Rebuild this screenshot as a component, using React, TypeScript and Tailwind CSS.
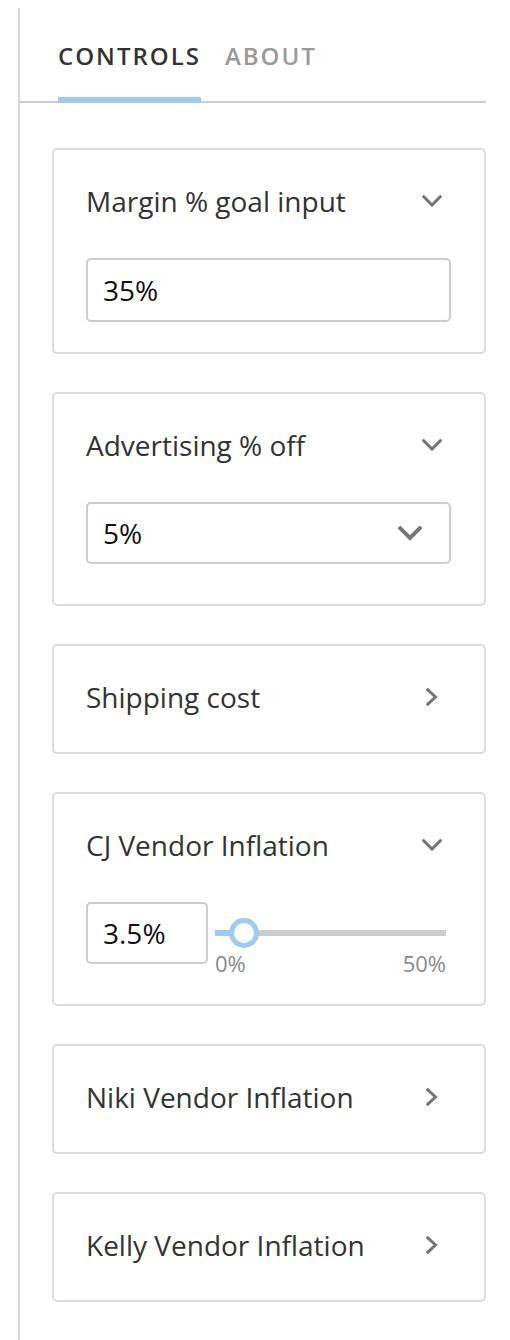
import React from "react";

const font = { fontFamily: '"Open Sans", "Liberation Sans", sans-serif' };

function ChevronDown() {
  return (
    <svg width="20" height="12" viewBox="0 0 20 12" fill="none">
      <path d="M1.8 1.8 L10 10 L18.2 1.8" stroke="#757575" strokeWidth="3" strokeLinecap="square" />
    </svg>
  );
}

function ChevronRight() {
  return (
    <svg width="13" height="18" viewBox="0 0 13 18" fill="none">
      <path d="M1.8 1.8 L9.5 9 L1.8 16.2" stroke="#757575" strokeWidth="3" strokeLinecap="square" />
    </svg>
  );
}

function SelectChevron() {
  return (
    <svg width="24" height="15" viewBox="0 0 24 15" fill="none">
      <path d="M2.3 2.3 L12 12 L21.7 2.3" stroke="#777777" strokeWidth="4" strokeLinecap="square" />
    </svg>
  );
}

function Card({
  title,
  open,
  children,
  pb,
}: {
  title: string;
  open: boolean;
  children?: React.ReactNode;
  pb?: string;
}) {
  return (
    <div className="border-2 border-[#dcdcdc] rounded-[5px] bg-white">
      <div className="flex items-start justify-between pl-[32px] pr-[40px] pt-[32px] pb-[36px]">
        <span className="text-[28px] leading-[38px] text-[#333333]">{title}</span>
        <span className="w-[24px] h-[38px] flex items-center justify-center">
          {open ? <ChevronDown /> : <ChevronRight />}
        </span>
      </div>
      {open && <div className={`pl-[32px] pr-[33px] pt-[2px] ${pb ?? ""}`}>{children}</div>}
    </div>
  );
}

export default function App() {
  const pct = 3.5 / 50;
  const trackW = 231;
  const thumb = 30;
  const left = pct * (trackW - thumb);
  return (
    <div className="bg-white min-h-[1340px] pt-[8px] pl-[18px]" style={font}>
      <div className="w-[468px] min-h-[1332px] border-l-2 border-[#d5d5d5]">
        <div className="flex gap-[24px] pl-[38px] pt-[32px] border-b-2 border-[#cccccc]">
          <div className="-mb-[2px] pb-[25px] border-b-[6px] border-[#9ecbee]">
            <span className="block text-[24px] leading-[32px] font-semibold tracking-[2px] text-[#333333]">
              CONTROLS
            </span>
          </div>
          <div className="-mb-[2px] pb-[25px] border-b-[6px] border-transparent">
            <span className="block text-[24px] leading-[32px] font-semibold tracking-[2px] text-[#9a9a9a]">
              ABOUT
            </span>
          </div>
        </div>

        <div className="ml-[32px] mt-[45px] flex flex-col gap-[38px] pb-[40px]">
          <Card title="Margin % goal input" open pb="pb-[30px]">
            <div className="h-[64px] border-2 border-[#cccccc] rounded-[5px] flex items-center pl-[15px] text-[28px] text-[#111111]">
              35%
            </div>
          </Card>

          <Card title="Advertising % off" open pb="pb-[40px]">
            <div className="h-[62px] border-2 border-[#cccccc] rounded-[5px] flex items-center justify-between pl-[15px] pr-[27px] text-[28px] text-[#111111]">
              <span>5%</span>
              <SelectChevron />
            </div>
          </Card>

          <Card title="Shipping cost" open={false} />

          <Card title="CJ Vendor Inflation" open pb="pb-[26px]">
            <div className="flex items-start">
              <div className="w-[122px] h-[62px] border-2 border-[#cccccc] rounded-[5px] flex items-center pl-[15px] text-[28px] text-[#111111]">
                3.5%
              </div>
              <div className="ml-[7px] w-[231px] pt-[16px] flex flex-col">
                <div className="relative h-[30px] flex items-center">
                  <div className="w-full h-[6px] bg-[#cccccc] flex">
                    <div className="h-full bg-[#9ecbee]" style={{ width: left + thumb / 2 }} />
                  </div>
                  <div
                    className="absolute top-0 w-[30px] h-[30px] rounded-full border-[5px] border-[#9ecbee] bg-white"
                    style={{ left }}
                  />
                </div>
                <div className="flex justify-between text-[22px] leading-[30px] text-[#8a8a8a]">
                  <span>0%</span>
                  <span>50%</span>
                </div>
              </div>
            </div>
          </Card>

          <Card title="Niki Vendor Inflation" open={false} />
          <Card title="Kelly Vendor Inflation" open={false} />
        </div>
      </div>
    </div>
  );
}
